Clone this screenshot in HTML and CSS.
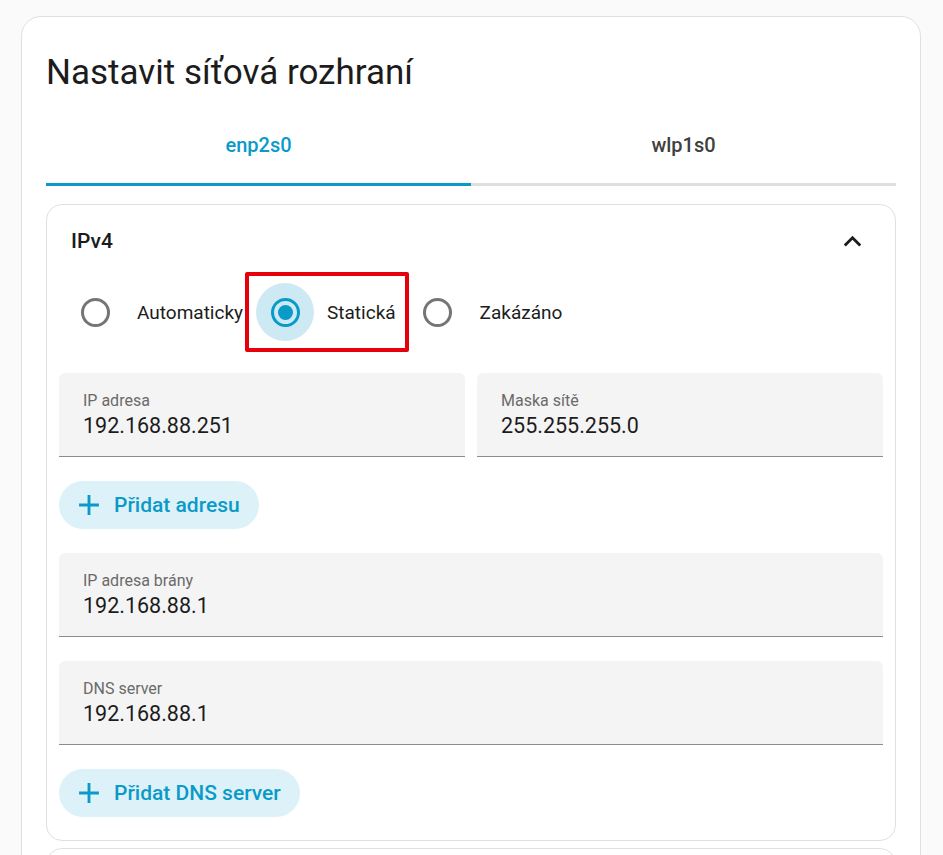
FILE: index.html
```html
<!DOCTYPE html>
<html lang="cs">
<head>
  <meta charset="UTF-8" />
  <meta name="viewport" content="width=device-width, initial-scale=1.0"/>
  <title>Nastavit síťová rozhraní</title>
  <link rel="stylesheet" href="styles.css">
</head>
<body>
  <div class="card">
    <h1 class="title">Nastavit síťová rozhraní</h1>

    <div class="tabs">
      <div class="tab active">enp2s0</div>
      <div class="tab">wlp1s0</div>
    </div>

    <div class="panel">
      <div class="panel-header">
        <span>IPv4</span>
        <svg class="chevron" viewBox="0 0 24 24"><path d="M7.41,15.41L12,10.83L16.59,15.41L18,14L12,8L6,14L7.41,15.41Z"/></svg>
      </div>

      <div class="panel-body">
        <div class="radio-group">
          <label class="formfield">
            <span class="radio"><span class="circle"></span></span>
            <span class="radio-label">Automaticky</span>
          </label>
          <label class="formfield highlighted">
            <span class="radio checked"><span class="circle"></span></span>
            <span class="radio-label">Statická</span>
            <span class="mark"></span>
          </label>
          <label class="formfield">
            <span class="radio"><span class="circle"></span></span>
            <span class="radio-label">Zakázáno</span>
          </label>
        </div>

        <div class="row">
          <div class="field">
            <div class="field-label">IP adresa</div>
            <div class="field-value">192.168.88.251</div>
          </div>
          <div class="field">
            <div class="field-label">Maska sítě</div>
            <div class="field-value">255.255.255.0</div>
          </div>
        </div>

        <button class="add-btn">
          <svg viewBox="0 0 24 24"><path d="M19,13H13V19H11V13H5V11H11V5H13V11H19V13Z"/></svg>
          Přidat adresu
        </button>

        <div class="field">
          <div class="field-label">IP adresa brány</div>
          <div class="field-value">192.168.88.1</div>
        </div>

        <div class="field">
          <div class="field-label">DNS server</div>
          <div class="field-value">192.168.88.1</div>
        </div>

        <button class="add-btn">
          <svg viewBox="0 0 24 24"><path d="M19,13H13V19H11V13H5V11H11V5H13V11H19V13Z"/></svg>
          Přidat DNS server
        </button>
      </div>
    </div>

    <!-- next section (collapsed), only its top edge is in view -->
    <div class="panel panel-collapsed"></div>
  </div>
</body>
</html>
```

FILE: styles.css
```css
body {
  margin: 0;
  background: #fafafa;
  font-family: Roboto, "Noto Sans", sans-serif;
  color: #212121;
}

.card {
  margin: 16px 0 0 21px;
  width: 900px;
  box-sizing: border-box;
  background: white;
  border: 1px solid #e0e0e0;
  border-radius: 20px;
  padding: 36px 24px 24px;
}

.title {
  margin: 0;
  font-size: 35px;
  line-height: 40px;
  font-weight: 400;
  color: #1c1c1c;
}

.tabs {
  display: flex;
  margin-top: 40px;
}

.tab {
  flex: 1;
  text-align: center;
  font-size: 20px;
  line-height: 24px;
  font-weight: 500;
  color: #404040;
  padding-bottom: 26px;
  border-bottom: 3px solid #e0e0e0;
}

.tab.active {
  color: #0a9ac8;
  border-bottom-color: #0a9ac8;
}

.panel {
  margin-top: 18px;
  border: 1px solid #e0e0e0;
  border-radius: 16px;
}

.panel + .panel {
  margin-top: 7px;
}

.panel-collapsed {
  height: 72px;
}

.panel-header {
  height: 72px;
  display: flex;
  align-items: center;
  justify-content: space-between;
  padding: 0 25px 0 24px;
  font-size: 21px;
  font-weight: 500;
  color: #1c1c1c;
}

.chevron {
  width: 35px;
  height: 35px;
  fill: #1c1c1c;
}

.panel-body {
  padding: 6px 12px 23px;
}

.radio-group {
  display: flex;
  padding-left: 7px;
  margin-bottom: 32px;
}

.formfield {
  position: relative;
  display: flex;
  align-items: center;
  height: 58px;
}

.radio {
  width: 58px;
  height: 58px;
  border-radius: 50%;
  display: flex;
  align-items: center;
  justify-content: center;
}

.radio .circle {
  width: 29px;
  height: 29px;
  box-sizing: border-box;
  border: 3px solid #757575;
  border-radius: 50%;
  display: flex;
  align-items: center;
  justify-content: center;
}

.radio.checked {
  background: #cde9f3;
}

.radio.checked .circle {
  border-color: #0a9ac8;
}

.radio.checked .circle::after {
  content: "";
  width: 15px;
  height: 15px;
  border-radius: 50%;
  background: #0a9ac8;
}

.radio-label {
  font-size: 19px;
  color: #1c1c1c;
  padding: 0 13px;
}

.mark {
  position: absolute;
  left: -11px;
  right: 0;
  top: -11px;
  bottom: -11px;
  border: 4px solid #e6000b;
  border-radius: 2px;
}

.row {
  display: flex;
  gap: 12px;
}

.row .field {
  flex: 1;
}

.field {
  background: #f4f4f4;
  border-radius: 6px 6px 0 0;
  border-bottom: 1px solid #8c8c8c;
  padding: 18px 24px 16px;
  margin-bottom: 24px;
}

.field-label {
  font-size: 16px;
  line-height: 20px;
  color: #6a6a6a;
}

.field-value {
  font-size: 21.5px;
  line-height: 29px;
  color: #1c1c1c;
}

.add-btn {
  display: flex;
  align-items: center;
  gap: 8px;
  height: 48px;
  border: none;
  border-radius: 24px;
  background: #ddf1f9;
  color: #0a9ac8;
  font-family: Roboto, sans-serif;
  font-size: 21px;
  font-weight: 500;
  padding: 0 19px 0 13px;
  margin-bottom: 24px;
  cursor: pointer;
}

.add-btn:last-child {
  margin-bottom: 0;
}

.add-btn svg {
  width: 34px;
  height: 34px;
  fill: #0a9ac8;
}
```
